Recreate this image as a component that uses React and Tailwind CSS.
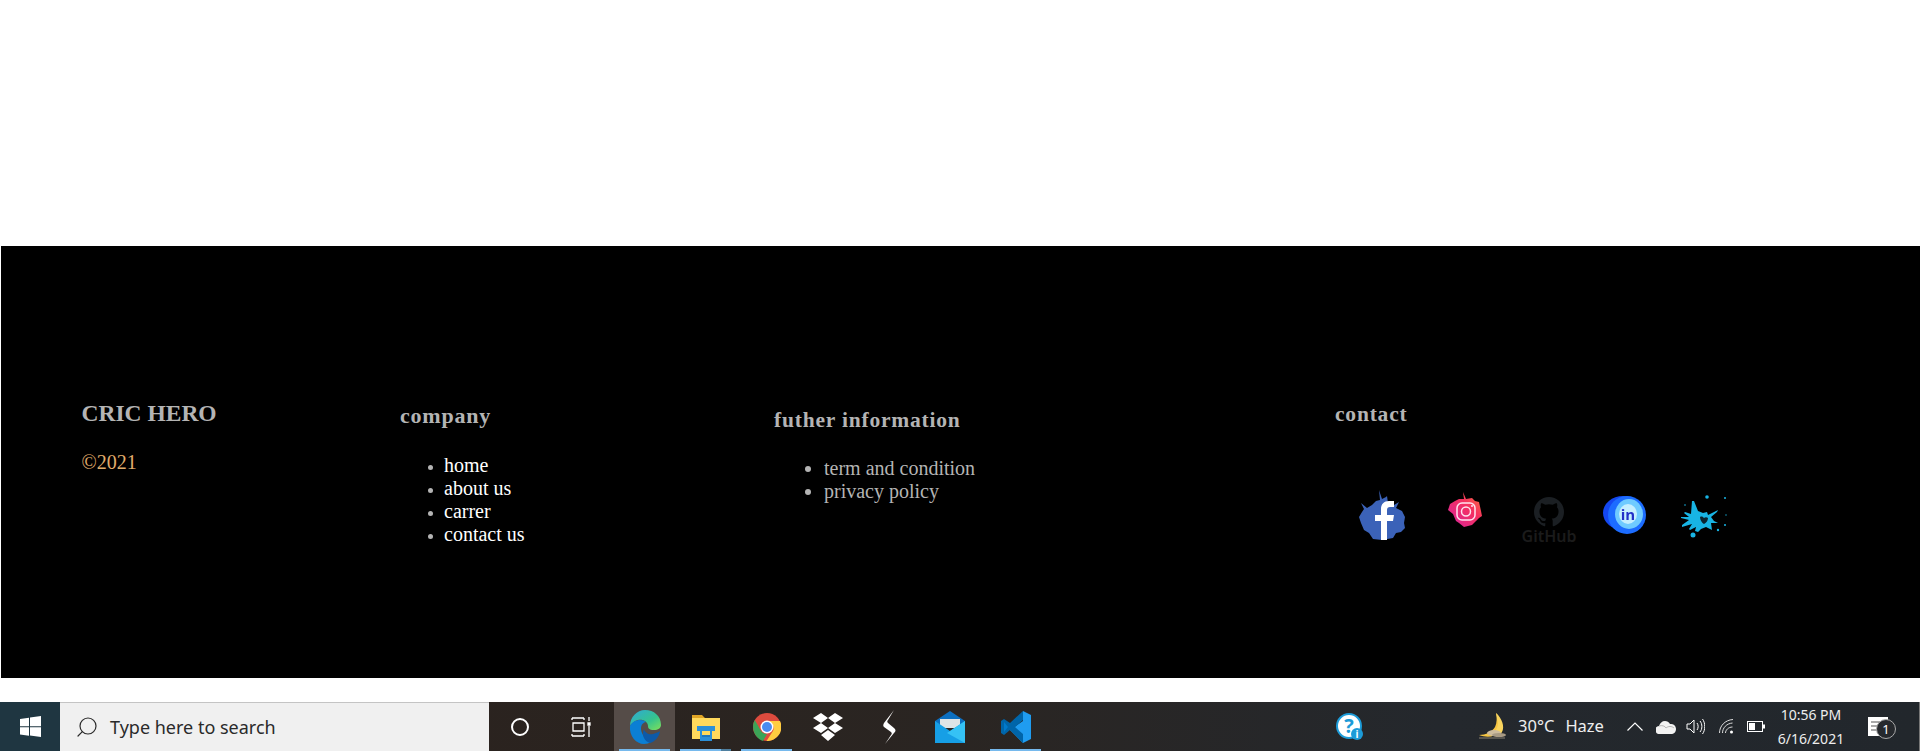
import { Search } from "lucide-react";

function Facebook() {
  return (
    <svg width="48" height="50" viewBox="0 0 48 50" className="blur-[0.5px]">
      <path fill="#3b62b8" d="M20 0l3 9 4-2 1-1 1 7 6 2 5-3-3 6 6 3 3 6-1 6 1 5-4 4-5 1-3 5-11 2-9-1-4-6-5-3-3-7-2-6 3-5 2-3-3-6 6 5 5-3 4-4 4-1z" />
      <path fill="#fff" d="M22 50V31h-6v-6h6v-6c0-5 3-8 8-8h5v6h-4c-2 0-3 1-3 3v5h7l-1 6h-6v19z" />
    </svg>
  );
}

function Instagram() {
  return (
    <svg width="35" height="35" viewBox="0 0 35 35" className="blur-[0.3px]">
      <defs>
        <linearGradient id="ig" x1="0" y1="1" x2="1" y2="0">
          <stop offset="0" stopColor="#d6249f" />
          <stop offset="0.6" stopColor="#f5305f" />
          <stop offset="1" stopColor="#fd7a3c" />
        </linearGradient>
      </defs>
      <path fill="url(#ig)" d="M15 0l3 7 6-1 3 3 4 1 2 9 1 5-3 2-3 3-4 4-8 2-5-4-3-2-3-7L0 18l2-6 5-3 4-2 5 0z" />
      <rect x="9" y="11" width="18" height="17" rx="5" fill="none" stroke="#ffe3ee" strokeWidth="1.5" />
      <circle cx="18" cy="19.5" r="4.5" fill="none" stroke="#ffe3ee" strokeWidth="1.5" />
      <circle cx="24" cy="14" r="1" fill="#ffe3ee" />
    </svg>
  );
}

function Github() {
  return (
    <svg width="56" height="54" viewBox="0 0 56 54">
      <path
        fill="#1b1f23"
        transform="translate(13 0) scale(1.25)"
        d="M12 0C5.37 0 0 5.37 0 12c0 5.3 3.44 9.8 8.2 11.39.6.11.82-.26.82-.58v-2.03c-3.34.73-4.04-1.61-4.04-1.61-.55-1.39-1.33-1.76-1.33-1.76-1.09-.74.08-.73.08-.73 1.2.09 1.84 1.24 1.84 1.24 1.07 1.83 2.81 1.3 3.49 1 .11-.78.42-1.31.76-1.61-2.67-.3-5.47-1.33-5.47-5.93 0-1.31.47-2.38 1.24-3.22-.14-.3-.54-1.52.1-3.18 0 0 1.01-.32 3.3 1.23a11.5 11.5 0 0 1 6 0c2.28-1.55 3.29-1.23 3.29-1.23.64 1.66.24 2.88.12 3.18.77.84 1.23 1.91 1.23 3.22 0 4.61-2.8 5.63-5.48 5.92.43.37.81 1.1.81 2.22v3.29c0 .32.22.7.83.58C20.57 21.8 24 17.3 24 12c0-6.63-5.37-12-12-12z"
      />
      <text x="28" y="45" textAnchor="middle" fill="#1b1b1b" fontSize="16" fontWeight="600" fontFamily="'Noto Sans', sans-serif">
        GitHub
      </text>
    </svg>
  );
}

function Linkedin() {
  return (
    <svg width="43" height="40" viewBox="0 0 43 40" className="blur-[0.5px]">
      <ellipse cx="20" cy="18" rx="20" ry="17" fill="#1447f0" />
      <ellipse cx="24" cy="20" rx="19" ry="19" fill="#1c6cff" />
      <ellipse cx="26" cy="19" rx="14" ry="15" fill="#6fcbff" />
      <ellipse cx="25" cy="19" rx="9" ry="10" fill="#c5efff" />
      <text x="25" y="24.5" textAnchor="middle" fill="#2330c8" fontSize="15" fontWeight="700" fontFamily="'Open Sans', sans-serif">
        in
      </text>
    </svg>
  );
}

function Twitter() {
  return (
    <svg width="48" height="47" viewBox="0 0 48 47" className="blur-[0.3px]">
      <path
        fill="#18b4e4"
        d="M12 6l2 0 4 10 5 2 4-1 1 3 10-5-1 2-6 5 3 4 4 2-7 0 1 7-6-3-5 2-3 3-3-1 1-4-6 3-1-1 3-5-10 3 0-2 7-5-8-2 0-1 8 0-5-4 1-1 6 2z"
      />
      <path fill="#0b2530" d="M20 22c2-1 3 0 4 1 1-1 3-1 4 0 0 3-2 5-4 6-2-1-4-4-4-7z" />
      <circle cx="13" cy="40" r="2.5" fill="#18b4e4" />
      <circle cx="27" cy="2" r="1.8" fill="#18b4e4" />
      <circle cx="45" cy="3" r="1" fill="#18b4e4" />
      <circle cx="45" cy="30" r="1" fill="#18b4e4" />
      <circle cx="38" cy="35" r="1.2" fill="#18b4e4" />
      <circle cx="46" cy="20" r="0.7" fill="#18b4e4" />
      <circle cx="5" cy="10" r="0.8" fill="#18b4e4" />
    </svg>
  );
}

function Footer() {
  return (
    <div className="ml-px mt-[246px] h-[432px] bg-black flex items-start font-['Liberation_Serif',serif] text-[20px] leading-[23px]">
      <div className="w-[399px] pl-[80.500px] pt-[154px] shrink-0">
        <h2 className="text-[#b4b4b4] text-[23.5px] leading-[26px] font-bold">CRIC HERO</h2>
        <p className="mt-[25px] text-[#e0ad6c]">©2021</p>
      </div>

      <div className="w-[374px] pt-[157px] shrink-0">
        <h3 className="text-[#b4b4b4] text-[22px] leading-[26px] font-bold tracking-[0.8px]">company</h3>
        <ul className="mt-[25px] pl-[44px] list-disc text-white marker:text-[#b4b4b4] marker:text-[16px]">
          <li>home</li>
          <li>about us</li>
          <li>carrer</li>
          <li>contact us</li>
        </ul>
      </div>

      <div className="w-[561px] pt-[161px] shrink-0">
        <h3 className="text-[#b4b4b4] text-[21.5px] leading-[26px] font-bold tracking-[0.8px]">futher information</h3>
        <ul className="mt-[24px] pl-[50px] list-disc text-[#b4b4b4]">
          <li>term and condition</li>
          <li>privacy policy</li>
        </ul>
      </div>

      <div className="pt-[155px]">
        <h3 className="text-[#b4b4b4] text-[21.5px] leading-[26px] font-bold tracking-[0.8px]">contact</h3>
        <div className="flex items-start mt-[63px] ml-[24px]">
          <Facebook />
          <div className="ml-[41px] mt-[2px]"><Instagram /></div>
          <div className="ml-[38px] mt-[7px]"><Github /></div>
          <div className="ml-[26px] mt-[5px]"><Linkedin /></div>
          <div className="ml-[34px] mt-[5px]"><Twitter /></div>
        </div>
      </div>
    </div>
  );
}

function TaskButton({ active, running, split, children }) {
  return (
    <div className={`relative w-[61px] h-full flex items-center justify-center ${active ? "bg-[#554c48]" : ""}`}>
      {children}
      {running && <div className="absolute bottom-0 left-[5px] right-[5px] h-[2px] bg-[#76b9ed]" />}
      {split && <div className="absolute bottom-0 right-[5px] w-[10px] h-[2px] bg-[#4f7f9f]" />}
    </div>
  );
}

function Taskbar() {
  return (
    <div className="mt-[24px] h-[49px] flex bg-[linear-gradient(90deg,#2b211c_0%,#2a2522_50%,#24282d_75%,#22272c_100%)] font-['Open_Sans',sans-serif]">
      <div className="w-[60px] bg-[#1f3641] flex items-center justify-center">
        <svg width="21" height="21" viewBox="0 0 21 21" fill="#fff">
          <path d="M0 3l9-1.300v8.500H0zM10 1.500L21 0v10.200H10zM0 11.200h9v8.500L0 18.400zM10 11.200h11V21l-11-1.500z" />
        </svg>
      </div>
      <div className="w-[429px] bg-[#f0f0f0] border-t border-[#c4c4c4] flex items-center pl-[15px] text-[#2a2a2a]">
        <Search size={24} strokeWidth={1.2} className="-scale-x-100" />
        <span className="ml-[11px] text-[18px] font-['Noto_Sans',sans-serif]">Type here to search</span>
      </div>

      <TaskButton>
        <div className="w-[18px] h-[18px] rounded-full border-[2.5px] border-white" />
      </TaskButton>
      <TaskButton>
        <svg width="20" height="22" viewBox="0 0 20 22" fill="none" stroke="#fff" strokeWidth="1.300">
          <path d="M1 2h12M2 7h11v8H2zM1 20h12M1 20v-2M13 20v-2M1 2v2M13 2v2M18 1v4M18 10v11" />
          <path d="M17 7h2v2h-2z" fill="#fff" />
        </svg>
      </TaskButton>
      <div className="w-[3px]" />
      <TaskButton active running>
        <svg width="32" height="34" viewBox="0 0 32 34">
          <defs>
            <linearGradient id="edge1" x1="0" y1="0" x2="1" y2="1">
              <stop offset="0" stopColor="#2fa8d8" />
              <stop offset="0.6" stopColor="#35c48d" />
              <stop offset="1" stopColor="#7fe05a" />
            </linearGradient>
          </defs>
          <path fill="url(#edge1)" d="M16 0c9 0 16 6 16 15 0 3-3 5-7 5-5 0-6-2-6-4 0-4-5-7-10-6-4 1-7 4-8 6 0-9 7-16 15-16z" />
          <path fill="#0b7fd4" d="M1 16c2-4 6-6 10-6 4 0 6 2 6 2-5 1-6 6-4 11 2 5 6 9 9 9-2 1-4 2-7 2C7 34 0 26 1 16z" />
          <path fill="#0d5aa8" d="M15 19c1 4 5 6 9 5 3-1 6-2 7-3-1 7-6 11-10 12-5-1-9-8-6-14z" />
        </svg>
      </TaskButton>
      <TaskButton running split>
        <svg width="28" height="28" viewBox="0 0 28 28">
          <path fill="#e0a526" d="M0 2h10l3 3h15v4H0z" />
          <path fill="#ffd95c" d="M0 5h28v21H0z" />
          <path fill="#2b8fd8" d="M5 13h18v5h-3v10H8V18H5z" />
          <path fill="#ffd95c" d="M10 18h8v5h-8z" />
          <path fill="#1f77bd" d="M10 22h8v2h-8z" />
        </svg>
      </TaskButton>
      <TaskButton running>
        <svg width="28" height="28" viewBox="0 0 28 28">
          <circle cx="14" cy="14" r="14" fill="#dd4b3e" />
          <path fill="#ffcd40" d="M14 8h13a14 14 0 0 1-13.500 20L20 18a7 7 0 0 0-6-10z" />
          <path fill="#3ba457" d="M1.800 7L8 18a7 7 0 0 0 6 3l-4 7C3 26-3 16 1.800 7z" />
          <circle cx="14" cy="14" r="6.500" fill="#fff" />
          <circle cx="14" cy="14" r="5" fill="#4a8cf0" />
        </svg>
      </TaskButton>
      <TaskButton>
        <svg width="30" height="28" viewBox="0 0 30 28" fill="#fff">
          <path d="M8 0l7 5-7 5-8-5zM22 0l8 5-8 5-7-5zM0 15l8-5 7 5-7 5zM30 15l-8-5-7 5 7 5zM8 22l7-5 7 5-7 6z" />
        </svg>
      </TaskButton>
      <TaskButton>
        <svg width="14" height="34" viewBox="0 0 14 34" fill="#fff">
          <path d="M12 0L2 13c-1 2-1 3 0 4l7 5c1 1 1 2 0 3L3 34l9-11c2-2 2-3 0-5l-6-5c-1-1-1-2 0-3z" />
        </svg>
      </TaskButton>
      <TaskButton>
        <svg width="30" height="32" viewBox="0 0 30 32">
          <path fill="#0c6fc0" d="M15 0L0 10v3h30v-3z" />
          <path fill="#dfe4e6" d="M5 8h20v9H5z" />
          <path fill="#169fe6" d="M0 10l15 10 15-10v22H0z" />
          <path fill="#35c2f5" d="M30 10L12 22l18 10z" />
        </svg>
      </TaskButton>
      <div className="w-[5px]" />
      <TaskButton running>
        <svg width="30" height="32" viewBox="0 0 30 32">
          <path fill="#1f9cf0" d="M22 0l8 4v24l-8 4-13-13 13-9z" />
          <path fill="#0065a9" d="M22 0L9 12 3 8 0 10v12l3 2 6-5 13 13V23l-8-7 8-7z" />
          <path fill="#007acc" d="M3 11l4 5-4 5z" />
        </svg>
      </TaskButton>

      <div className="ml-[289px] w-[30px] flex items-center justify-center">
        <svg width="28" height="28" viewBox="0 0 28 28">
          <circle cx="13" cy="13" r="12" fill="#fff" stroke="#1c9bd8" strokeWidth="2" />
          <text x="13" y="20" textAnchor="middle" fontSize="20" fontWeight="700" fill="#1c9bd8" fontFamily="'Open Sans', sans-serif">?</text>
          <circle cx="21" cy="21" r="6" fill="#1c9bd8" />
          <text x="21" y="25" textAnchor="middle" fontSize="10" fontWeight="700" fill="#fff" fontFamily="'Open Sans', sans-serif">i</text>
        </svg>
      </div>

      <div className="ml-[113px] w-[28px] flex items-center justify-center">
        <svg width="27" height="27" viewBox="0 0 27 27">
          <path fill="#f6c542" d="M17 0c5 6 6 14 3 19-4 5-12 6-20 3 7 0 13-3 16-8 2-4 2-10 1-14z" />
          <path fill="#f9d45e" d="M17 0c6 5 9 14 6 19-1 2-2 3-3 3-3-1-5-1-9 0 6-3 8-8 8-12z" />
          <ellipse cx="15" cy="20" rx="7" ry="3" fill="#cdbb9d" />
          <ellipse cx="20" cy="22" rx="7" ry="2" fill="#a89a84" />
          <path stroke="#8a8172" d="M0 25h26" />
        </svg>
      </div>
      <div className="ml-[12px] flex items-center text-[16.5px] text-[#eeeeee] font-['Noto_Sans',sans-serif]">
        <span>30°C</span>
        <span className="ml-[11px]">Haze</span>
      </div>

      <div className="ml-[23px] flex items-center text-white">
        <svg width="16" height="9" viewBox="0 0 16 9" fill="none" stroke="#fff" strokeWidth="1.200">
          <path d="M0.500 8.500L8 1l7.500 7.500" />
        </svg>
        <svg width="20" height="14" viewBox="0 0 20 14" className="ml-[13px]">
          <path fill="#f2f2f2" d="M4 14a4 4 0 0 1-1-8c1-3 3-5 6-5 2 0 4 1 5 3a5 5 0 0 1 6 5c0 3-2 5-5 5z" />
          <path stroke="#b5b5b5" fill="none" d="M3 6c3-1 6 0 7 2M10 8c2-2 6-2 8 0" />
        </svg>
        <svg width="19" height="17" viewBox="0 0 19 17" fill="none" stroke="#fff" strokeWidth="1" className="ml-[10px]">
          <path d="M1 6h3l4-4v13l-4-4H1zM11 5c1.500 2 1.500 5 0 7M14 3c2.500 3 2.500 8 0 11M16.500 1c3 4 3 11 0 15" />
        </svg>
        <svg width="15" height="15" viewBox="0 0 15 15" fill="none" stroke="#ddd" strokeWidth="1" className="ml-[14px]">
          <path d="M0.500 14C0.500 7 6 1 14 0.500M3.500 14c0-5 4-9.500 10-10M6.500 14c0-3 3-6 7-6" />
          <circle cx="12.500" cy="13" r="1.500" fill="#fff" stroke="none" />
        </svg>
        <svg width="18" height="11" viewBox="0 0 18 11" className="ml-[13px]">
          <rect x="0.500" y="0.500" width="15" height="10" fill="none" stroke="#fff" />
          <rect x="2" y="2" width="6" height="7" fill="#fff" />
          <rect x="16" y="3.500" width="2" height="4" fill="#fff" />
        </svg>
      </div>

      <div className="ml-[9px] w-[74px] flex flex-col items-center justify-center text-[14px] leading-[24px] text-[#eeeeee] font-['Noto_Sans',sans-serif]">
        <span>10:56 PM</span>
        <span>6/16/2021</span>
      </div>

      <div className="relative ml-[20px] w-[36px] flex items-center">
        <svg width="20" height="20" viewBox="0 0 20 20">
          <path fill="#fff" d="M0 0h20v19H0z" />
          <path stroke="#555" strokeWidth="1.200" d="M3 5h14M3 9h14M3 13h9" />
        </svg>
        <div className="absolute left-[8px] top-[17px] w-[20px] h-[20px] rounded-full border border-[#aaa] bg-[#26292d] text-white text-[13px] leading-[18px] text-center font-['Noto_Sans',sans-serif]">
          1
        </div>
      </div>
      <div className="ml-auto w-px bg-[#777]" />
    </div>
  );
}

export default function App() {
  return (
    <div className="w-[1920px] h-[751px] bg-white overflow-hidden flex flex-col">
      <Footer />
      <Taskbar />
    </div>
  );
}
